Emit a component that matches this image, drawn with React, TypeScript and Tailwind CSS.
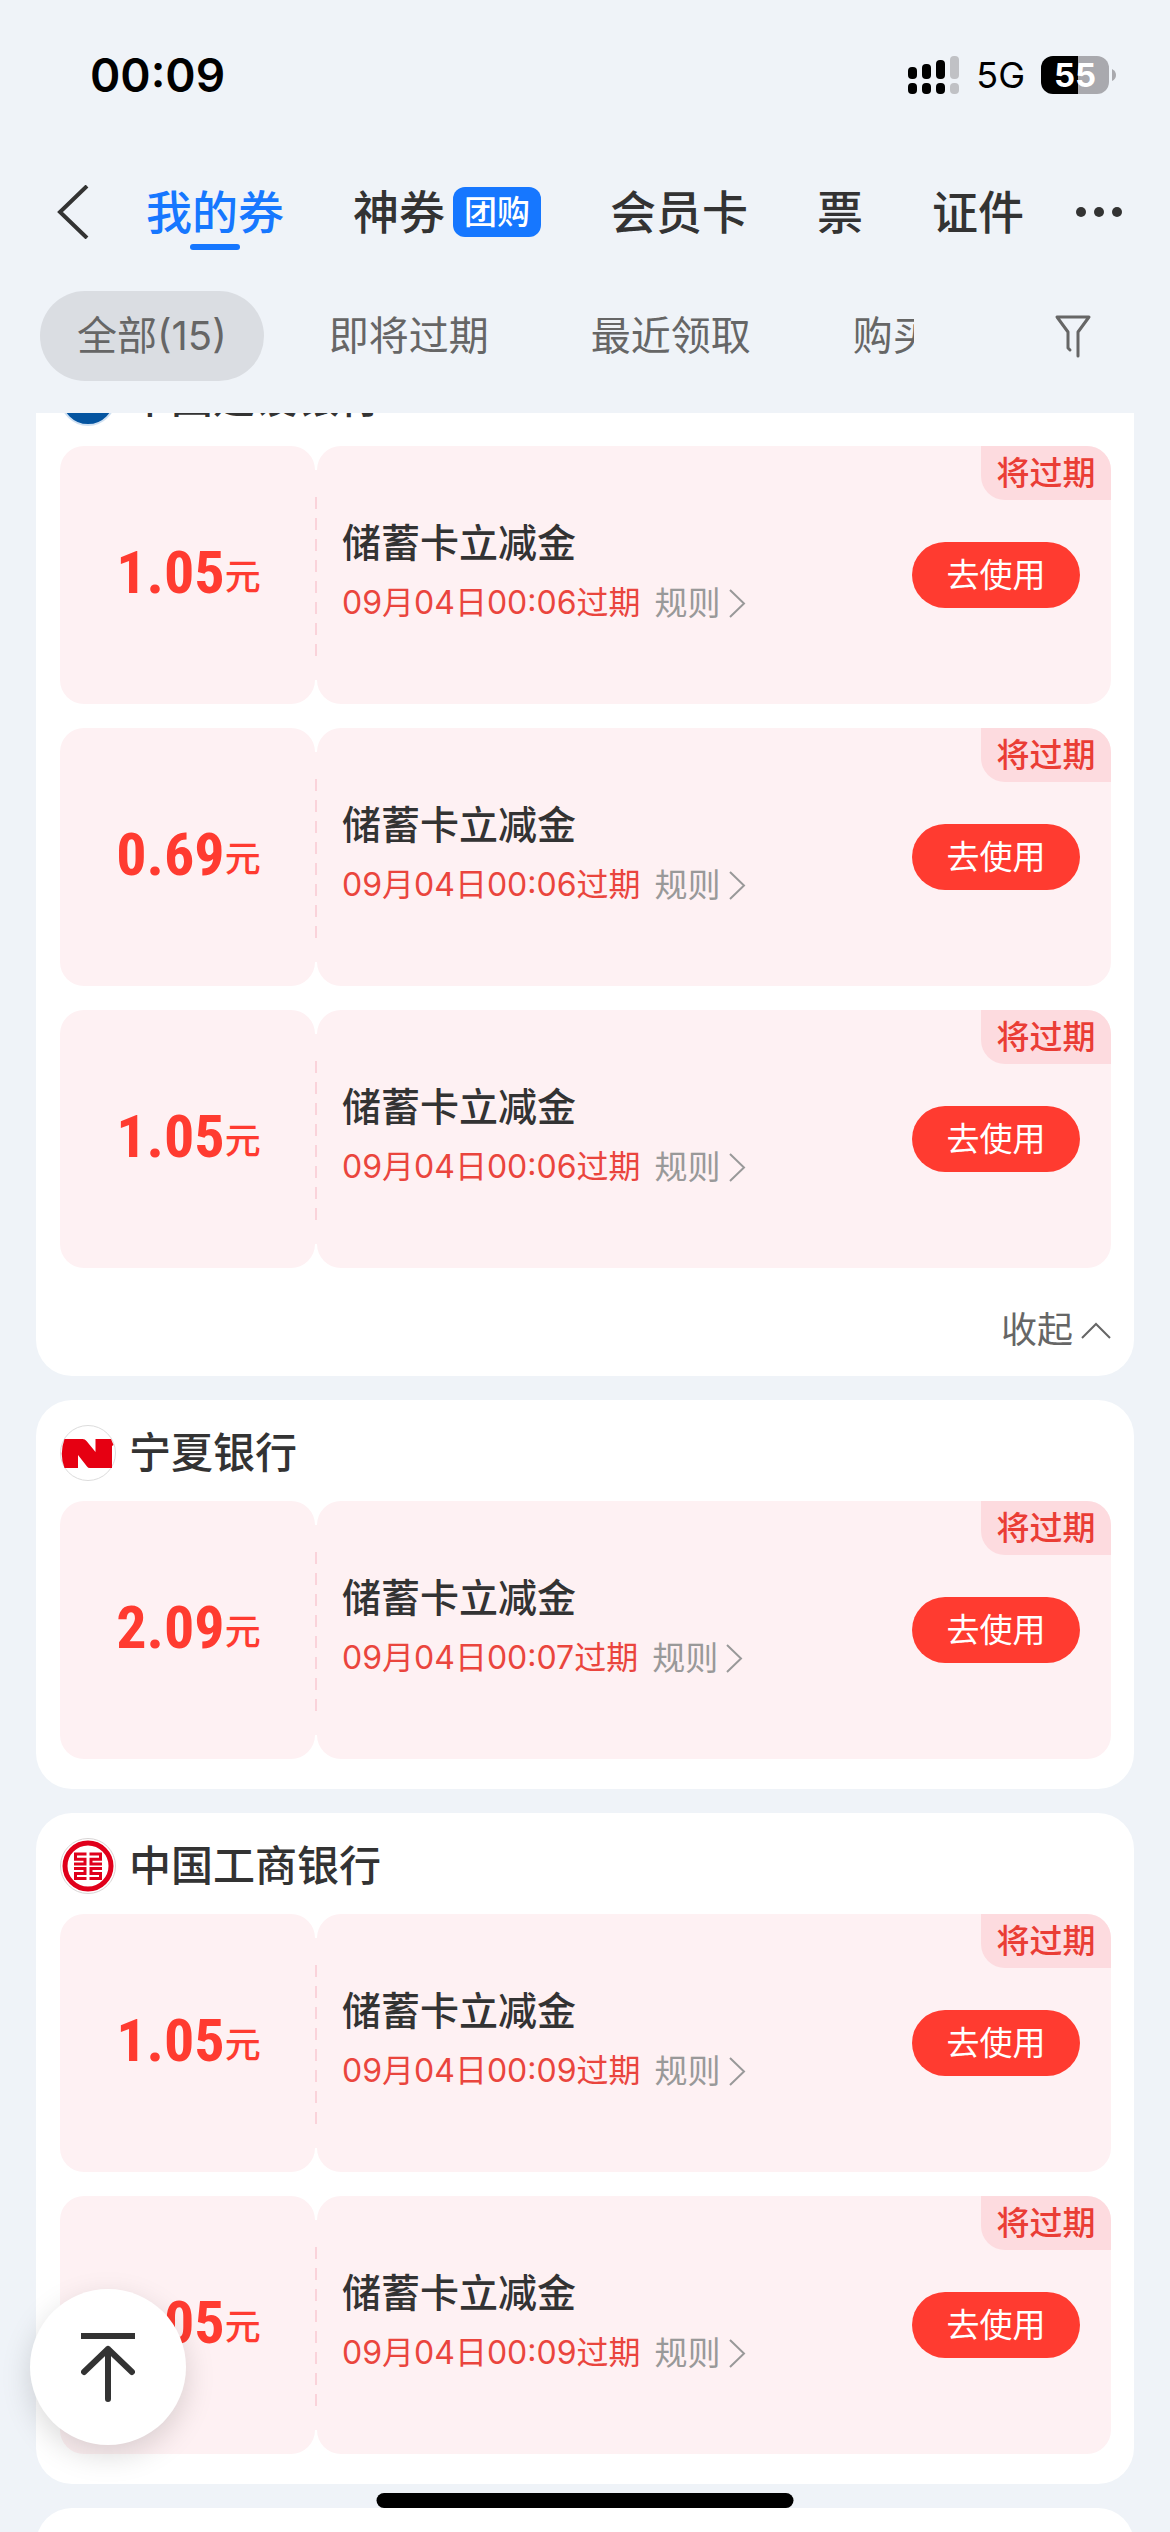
import React, { useState } from 'react';

interface Coupon {
  id: string;
  amount: string;
  expires: string;
}

interface BankGroup {
  bank: string;
  logo: React.ReactNode;
  coupons: Coupon[];
  collapsible?: boolean;
}

function BlueLogo() {
  return (
    <svg viewBox="0 0 56 56" className="size-14" aria-hidden="true">
      <circle cx="28" cy="28" r="27" fill="#0454a0" stroke="#cfe0f2" strokeWidth="2" />
    </svg>
  );
}

function NingxiaLogo() {
  return (
    <svg viewBox="0 0 56 56" className="size-14" aria-hidden="true">
      <circle cx="28" cy="28" r="27.5" fill="#fff" stroke="#dcdcdc" />
      <path
        d="M4.500 14H22.500Q25 14 26.500 16L35.500 27V14H51L53.500 20L52 21V43H30Q28 43 27 41.500L18 30V43H4.500Q-1 29 4.500 14Z"
        fill="#e60012"
      />
    </svg>
  );
}

function IcbcLogo() {
  return (
    <svg viewBox="0 0 56 56" className="size-14" aria-hidden="true">
      <circle cx="28" cy="28" r="27.5" fill="#fff" stroke="#d8d4d4" />
      <circle cx="28" cy="28" r="23" fill="none" stroke="#e0001b" strokeWidth="5" />
      <g fill="none" stroke="#e0001b" strokeWidth="3">
        <path d="M26.500 16H15.500V21.200H25V26H14" />
        <path d="M14 30.500H25V35.500H15.500V40.500H26.500" />
        <path d="M29.500 16H40.500V21.200H31V26H42" />
        <path d="M42 30.500H31V35.500H40.500V40.500H29.500" />
      </g>
    </svg>
  );
}

const groups: BankGroup[] = [
  {
    bank: '中国建设银行',
    logo: <BlueLogo />,
    collapsible: true,
    coupons: [
      { id: 'ccb-1', amount: '1.05', expires: '09月04日00:06过期' },
      { id: 'ccb-2', amount: '0.69', expires: '09月04日00:06过期' },
      { id: 'ccb-3', amount: '1.05', expires: '09月04日00:06过期' },
    ],
  },
  {
    bank: '宁夏银行',
    logo: <NingxiaLogo />,
    coupons: [{ id: 'nx-1', amount: '2.09', expires: '09月04日00:07过期' }],
  },
  {
    bank: '中国工商银行',
    logo: <IcbcLogo />,
    coupons: [
      { id: 'icbc-1', amount: '1.05', expires: '09月04日00:09过期' },
      { id: 'icbc-2', amount: '1.05', expires: '09月04日00:09过期' },
    ],
  },
];

const tabs = ['我的券', '神券', '会员卡', '票', '证件'];
const filters = ['全部(15)', '即将过期', '最近领取', '购买'];

function StatusBar() {
  return (
    <div className="flex h-[150px] shrink-0 items-center justify-between pl-[90px] pr-[54px] text-black">
      <span className="text-[46px] font-semibold leading-none">00:09</span>
      <div className="flex items-center">
        <svg width="52" height="38" viewBox="0 0 52 38" aria-hidden="true">
          <rect x="0" y="11" width="9" height="12" rx="4" />
          <rect x="14" y="8" width="9" height="15" rx="4" />
          <rect x="28" y="4" width="9" height="19" rx="4" />
          <rect x="42" y="0" width="9" height="23" rx="4" fill="#c0c1c5" />
          <rect x="0" y="27" width="9" height="11" rx="4" />
          <rect x="14" y="27" width="9" height="11" rx="4" />
          <rect x="28" y="27" width="9" height="11" rx="4" />
          <rect x="42" y="27" width="9" height="11" rx="4" fill="#c0c1c5" />
        </svg>
        <span className="ml-4 text-[36px] leading-none">5G</span>
        <span className="ml-4 flex h-[38px] w-[68px] items-center justify-center rounded-xl bg-linear-to-r from-black from-55% to-[#a9a9ae] to-55% text-[33px] font-bold leading-none text-white">
          55
        </span>
        <svg width="7" height="14" viewBox="0 0 7 14" aria-hidden="true">
          <path d="M3 1Q7 3 7 7Q7 11 3 13Z" fill="#a9a9ae" />
        </svg>
      </div>
    </div>
  );
}

function CouponCard({ coupon }: { coupon: Coupon }) {
  return (
    <li className="relative flex h-[258px]">
      <div className="flex w-[255px] items-center justify-center rounded-3xl bg-[#fef1f3] pb-1 pl-0.5 text-[#ff3b30]">
        <p className="flex items-end">
          <span className="font-['Roboto_Condensed',Roboto,sans-serif] text-[60px] font-bold leading-none">{coupon.amount}</span>
          <span className="mb-2 text-[36px] font-medium leading-none">元</span>
        </p>
      </div>

      <div className="my-6 w-0.5 bg-[#fef1f3] py-[27px]">
        <div className="h-[159px] bg-[repeating-linear-gradient(to_bottom,#fad3da_0_12px,transparent_12px_21px)]" />
      </div>

      <div className="flex flex-1 items-center justify-between rounded-3xl bg-[#fef1f3] pl-[25px] pr-[31px]">
        <div className="flex flex-col gap-3 pb-1">
          <h3 className="text-[39px] font-medium leading-[48px] text-[#333]">储蓄卡立减金</h3>
          <div className="flex items-center text-[33px] leading-[48px]">
            <span className="text-[32px] text-[#ea453d]">{coupon.expires}</span>
            <button type="button" className="ml-[14px] flex items-center gap-2 text-[#999]">
              规则
              <svg width="17" height="29" viewBox="0 0 17 29" fill="none" stroke="currentColor" strokeWidth="2" aria-hidden="true">
                <path d="M1 1L15 14.500L1 28" />
              </svg>
            </button>
          </div>
        </div>
        <button type="button" className="h-[66px] w-[168px] rounded-full bg-[#ff3b30] text-[33px] leading-none text-white">
          去使用
        </button>
      </div>

      <span className="absolute right-0 top-0 flex h-[54px] w-[130px] items-center justify-center rounded-bl-3xl rounded-tr-3xl bg-[#fddbdf] text-[33px] font-medium leading-none text-[#ea3d35]">
        将过期
      </span>
    </li>
  );
}

function BankSection({ group }: { group: BankGroup }) {
  return (
    <section className="shrink-0 rounded-[36px] bg-white pl-6 pr-[23px]">
      <header className="flex items-center gap-[13px] pb-5 pt-[25px]">
        {group.logo}
        <h2 className="text-[42px] font-medium leading-[56px] text-[#333]">{group.bank}</h2>
      </header>
      <ul className="flex flex-col gap-6">
        {group.coupons.map((coupon) => (
          <CouponCard key={coupon.id} coupon={coupon} />
        ))}
      </ul>
      {group.collapsible ? (
        <div className="flex h-[108px] items-center justify-end pt-4">
          <button type="button" className="flex items-center gap-2 text-[36px] leading-none text-[#666]">
            收起
            <svg width="30" height="17" viewBox="0 0 30 17" fill="none" stroke="currentColor" strokeWidth="2" aria-hidden="true">
              <path d="M1 16L15 2L29 16" />
            </svg>
          </button>
        </div>
      ) : (
        <div className="h-[30px]" />
      )}
    </section>
  );
}

export default function App() {
  const [activeTab, setActiveTab] = useState('我的券');
  const [activeFilter, setActiveFilter] = useState('全部(15)');

  return (
    <div className="relative flex h-screen flex-col overflow-hidden bg-[#eff3f8] font-[Inter,'Noto_Sans_CJK_SC',sans-serif]">
      <StatusBar />

      <div className="flex h-[124px] shrink-0 items-center pl-[57px] pr-12 text-[#333]">
        <button type="button" aria-label="返回">
          <svg width="32" height="54" viewBox="0 0 32 54" fill="none" stroke="currentColor" strokeWidth="4" aria-hidden="true">
            <path d="M30 1L3 27L30 53" />
          </svg>
        </button>
        <nav className="ml-[57px] flex items-center gap-[69px]">
          {tabs.map((tab) => (
            <button
              key={tab}
              type="button"
              onClick={() => setActiveTab(tab)}
              className={`relative flex items-center gap-2 text-[46px] font-medium leading-[60px] ${
                activeTab === tab ? 'text-[#1677ff]' : 'text-[#333]'
              }`}
            >
              {tab}
              {tab === '神券' && (
                <span className="flex h-[50px] w-[88px] items-center justify-center rounded-xl bg-[#1677ff] text-[33px] font-medium leading-none text-white">
                  团购
                </span>
              )}
              {activeTab === tab && (
                <span className="absolute -bottom-2 left-1/2 h-1.5 w-[50px] -translate-x-1/2 rounded-full bg-[#1677ff]" />
              )}
            </button>
          ))}
        </nav>
        <button type="button" aria-label="更多" className="ml-auto">
          <svg width="46" height="10" viewBox="0 0 46 10" fill="currentColor" aria-hidden="true">
            <circle cx="5" cy="5" r="5" />
            <circle cx="23" cy="5" r="5" />
            <circle cx="41" cy="5" r="5" />
          </svg>
        </button>
      </div>

      <div className="flex h-[139px] shrink-0 items-center pb-4 pl-10 pr-[78px] text-[#666]">
        <div className="mr-[140px] flex flex-1 gap-7 overflow-hidden">
          {filters.map((filter) => (
            <button
              key={filter}
              type="button"
              onClick={() => setActiveFilter(filter)}
              className={`h-[90px] shrink-0 rounded-full px-[37px] text-[40px] leading-none ${
                activeFilter === filter ? 'bg-[#dadde2]' : ''
              }`}
            >
              {filter}
            </button>
          ))}
        </div>
        <button type="button" aria-label="筛选">
          <svg width="38" height="44" viewBox="0 0 38 44" fill="none" stroke="currentColor" strokeWidth="3" strokeLinecap="round" strokeLinejoin="round" aria-hidden="true">
            <path d="M16 36L14 34V18L3 3H35L24 18V42" />
          </svg>
        </button>
      </div>

      <main className="flex-1 overflow-hidden px-9">
        {/* list is scrolled slightly past the first bank's header */}
        <div className="-mt-[68px] flex flex-col gap-6">
          {groups.map((group) => (
            <BankSection key={group.bank} group={group} />
          ))}
          <div className="h-24 rounded-t-[36px] bg-white" />
        </div>
      </main>

      <button
        type="button"
        aria-label="回到顶部"
        className="absolute bottom-[87px] left-[30px] flex size-[156px] items-center justify-center rounded-full bg-white text-[#333] shadow-[0_10px_30px_rgba(0,0,0,0.15)]"
      >
        <svg width="54" height="70" viewBox="0 0 54 70" fill="none" stroke="currentColor" strokeWidth="6" aria-hidden="true">
          <path d="M0 4H54" />
          <path d="M3 40L27 17L51 40M27 17V67" strokeLinecap="round" strokeLinejoin="round" />
        </svg>
      </button>

      <div className="absolute bottom-6 left-1/2 h-[15px] w-[417px] -translate-x-1/2 rounded-full bg-black" />
    </div>
  );
}
